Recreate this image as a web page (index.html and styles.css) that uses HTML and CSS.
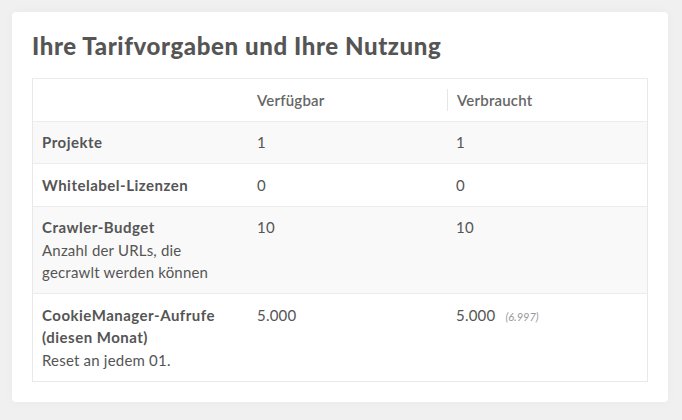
FILE: index.html
```html
<!DOCTYPE html>
<html lang="de">
<head>
<meta charset="utf-8">
<link rel="stylesheet" href="styles.css">
</head>
<body>
<div class="card">
  <h2 class="title">Ihre Tarifvorgaben und Ihre Nutzung</h2>
  <table class="usage">
    <thead>
      <tr>
        <th class="c1"></th>
        <th class="c2">Verfügbar</th>
        <th class="c3"><span class="sep">Verbraucht</span></th>
      </tr>
    </thead>
    <tbody>
      <tr class="alt">
        <td><strong>Projekte</strong></td>
        <td>1</td>
        <td>1</td>
      </tr>
      <tr>
        <td><strong>Whitelabel-Lizenzen</strong></td>
        <td>0</td>
        <td>0</td>
      </tr>
      <tr class="alt">
        <td><strong>Crawler-Budget</strong><br>Anzahl der URLs, die gecrawlt werden können</td>
        <td>10</td>
        <td>10</td>
      </tr>
      <tr>
        <td><strong>CookieManager-Aufrufe (diesen Monat)</strong><br>Reset an jedem 01.</td>
        <td>5.000</td>
        <td>5.000 <span class="extra">(6.997)</span></td>
      </tr>
    </tbody>
  </table>
</div>
</body>
</html>
```
FILE: styles.css
```css
html, body { margin: 0; padding: 0; }
body {
  background: #f0f0f1;
  width: 682px;
  height: 420px;
  padding: 12px;
  box-sizing: border-box;
  font-family: "Lato", "Open Sans", sans-serif;
  color: #555;
}
.card {
  background: #fff;
  border-radius: 4px;
  width: 656px;
  box-sizing: border-box;
  padding: 18px 20px 20px 20px;
  box-shadow: 0 0 12px rgba(0,0,0,0.03);
}
.title {
  margin: 0 0 17px 0;
  font-family: "Lato", sans-serif;
  font-weight: 900;
  font-size: 24px;
  line-height: 31px;
  color: #555;
  letter-spacing: 0.6px;
}
.usage {
  width: 616px;
  border-collapse: collapse;
  border: 1px solid #e8e8e8;
  font-size: 15px;
  line-height: 22.5px;
  letter-spacing: 0.2px;
  table-layout: fixed;
}
.usage th, .usage td {
  text-align: left;
  vertical-align: top;
  padding: 9.5px 10px 9.5px 9px;
  border-top: 1px solid #ececec;
}
.usage th {
  font-weight: 600;
  color: #666;
}
.c1 { width: 196px; }
.c2 { width: 180px; }
.usage th.c3 { padding-left: 0; }
.sep {
  display: block;
  border-left: 1px solid #e6e6e6;
  padding-left: 9px;
}
.usage tr.alt td { background: #f9f9f9; }
.usage strong { font-weight: 700; color: #555; letter-spacing: 0.5px; }
.extra {
  font-size: 11px;
  font-style: italic;
  color: #999;
  letter-spacing: 0;
  margin-left: 6px;
}
```
